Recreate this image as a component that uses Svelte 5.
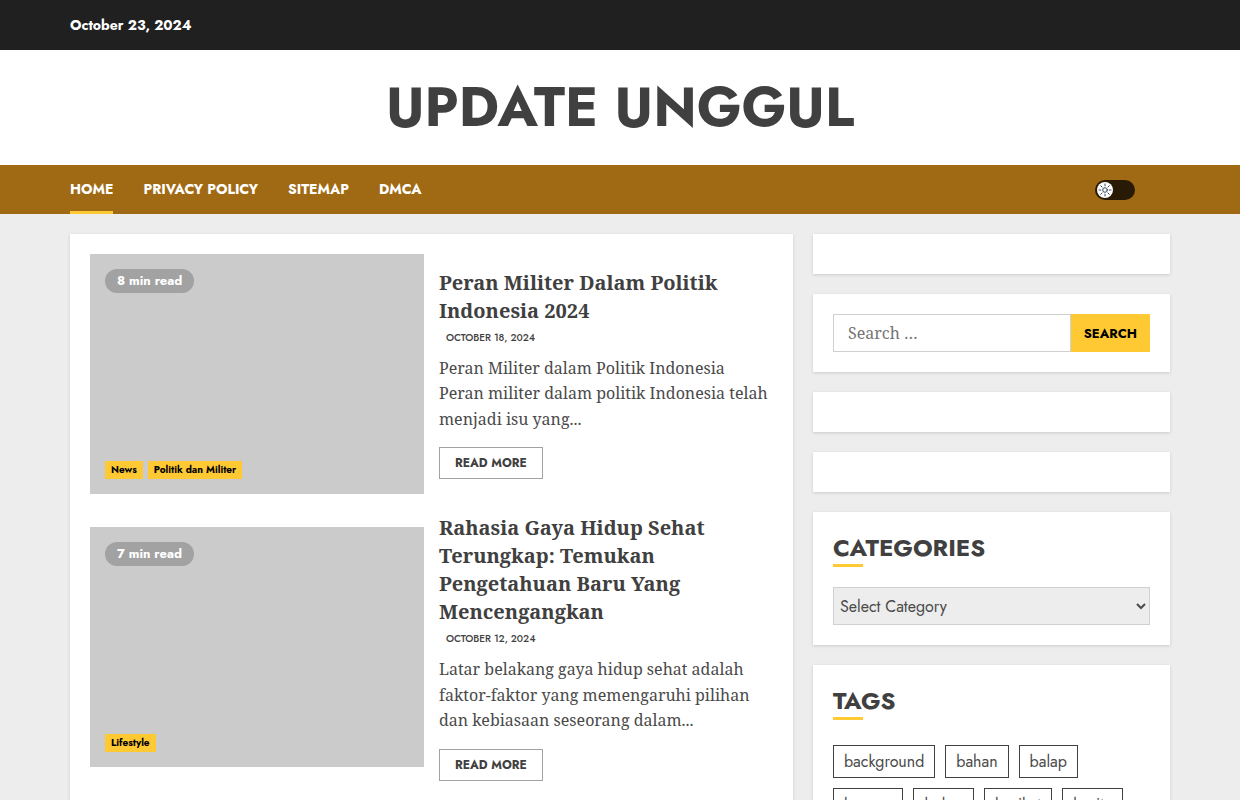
<script>
  const menu = ['Home', 'Privacy Policy', 'Sitemap', 'DMCA'];

  const posts = [
    {
      title: 'Peran Militer Dalam Politik Indonesia 2024',
      date: 'October 18, 2024',
      minutes: 8,
      cats: ['News', 'Politik dan Militer'],
      excerpt: 'Peran Militer dalam Politik Indonesia Peran militer dalam politik Indonesia telah menjadi isu yang...',
    },
    {
      title: 'Rahasia Gaya Hidup Sehat Terungkap: Temukan Pengetahuan Baru Yang Mencengangkan',
      date: 'October 12, 2024',
      minutes: 7,
      cats: ['Lifestyle'],
      excerpt: 'Latar belakang gaya hidup sehat adalah faktor-faktor yang memengaruhi pilihan dan kebiasaan seseorang dalam...',
    },
  ];

  const tags = ['background', 'bahan', 'balap', 'bangsa', 'bekas', 'berikut', 'berita'];

  const rays = [0, 45, 90, 135, 180, 225, 270, 315];

  let dark = $state(false);
  let query = $state('');
</script>

<div class="page">
  <div class="topbar">
    <div class="container">
      <span class="date">October 23, 2024</span>
    </div>
  </div>

  <header class="masthead">
    <h1><a href="#home">UPDATE UNGGUL</a></h1>
  </header>

  <nav class="navbar">
    <div class="container nav-inner">
      <ul class="menu">
        {#each menu as item, i}
          <li><a href="#{item}" class:active={i === 0}>{item}</a></li>
        {/each}
      </ul>
      <label class="toggle">
        <input type="checkbox" bind:checked={dark} aria-label="Dark mode" />
        <span class="knob">
          <svg viewBox="0 0 16 16" aria-hidden="true">
            <circle cx="8" cy="8" r="2.3" />
            {#each rays as angle}
              <line x1="8" y1="2" x2="8" y2="3.8" transform="rotate({angle} 8 8)" />
            {/each}
          </svg>
        </span>
      </label>
    </div>
  </nav>

  <div class="container content">
    <main class="posts">
      {#each posts as post}
        <article class="post">
          <div class="thumb">
            <span class="min-read">{post.minutes} min read</span>
            <div class="cats">
              {#each post.cats as cat}
                <a href="#{cat}">{cat}</a>
              {/each}
            </div>
          </div>
          <div class="details">
            <h3><a href="#post">{post.title}</a></h3>
            <div class="meta">{post.date}</div>
            <p>{post.excerpt}</p>
            <a class="read-more" href="#post">Read More</a>
          </div>
        </article>
      {/each}
    </main>

    <aside class="sidebar">
      <div class="widget"></div>
      <div class="widget">
        <form class="search" onsubmit={(e) => e.preventDefault()}>
          <input type="search" placeholder="Search …" aria-label="Search for:" bind:value={query} />
          <button type="submit">Search</button>
        </form>
      </div>
      <div class="widget"></div>
      <div class="widget"></div>
      <div class="widget">
        <h2>Categories</h2>
        <select aria-label="Categories">
          <option>Select Category</option>
          <option>Lifestyle</option>
          <option>News</option>
          <option>Politik dan Militer</option>
        </select>
      </div>
      <div class="widget">
        <h2>Tags</h2>
        <div class="tags">
          {#each tags as tag}
            <a href="#{tag}">{tag}</a>
          {/each}
        </div>
      </div>
    </aside>
  </div>
</div>

<style>
  :global(body) {
    margin: 0;
    background: #ededed;
  }

  .page {
    --sans: Jost, Lato, 'Open Sans', sans-serif;
    --serif: 'Noto Serif', 'DejaVu Serif Condensed', 'DejaVu Serif', serif;
    --accent: #ffc934;
    height: 100vh;
    overflow: hidden;
    font-family: var(--serif);
    font-size: 16px;
    line-height: 1.6;
    color: #4a4a4a;
  }

  .page * { box-sizing: border-box; }

  a {
    color: inherit;
    text-decoration: none;
  }

  .container {
    max-width: 1100px;
    margin: 0 auto;
  }

  /* Header */
  .topbar {
    padding: 13px 0;
    background: #202020;
    color: #fff;
    font: 700 14px/24px var(--sans);
  }

  .date { display: block; }

  .masthead {
    padding: 20px 0;
    background: #fff;
    text-align: center;
  }

  h1 {
    margin: 0;
    font: 700 55px/75px var(--sans);
    color: #404040;
  }

  .navbar {
    background: #a06a15;
    color: #fff;
  }

  .nav-inner {
    display: flex;
    align-items: center;
    justify-content: space-between;
  }

  .menu {
    display: flex;
    gap: 30px;
    margin: 0;
    padding: 0;
    list-style: none;
  }

  .menu a {
    display: block;
    font: 700 14px/49px var(--sans);
    text-transform: uppercase;
  }

  .menu a.active { box-shadow: inset 0 -3px var(--accent); }

  .toggle {
    display: flex;
    width: 40px;
    height: 20px;
    margin-right: 35px;
    padding: 2px;
    border-radius: 10px;
    background: #281a05;
    cursor: pointer;
  }

  .toggle input {
    position: absolute;
    margin: 0;
    opacity: 0;
  }

  .knob {
    width: 16px;
    height: 16px;
    border-radius: 50%;
    background: #fff;
  }

  .toggle input:checked + .knob { margin-left: auto; }

  .knob svg {
    display: block;
    fill: none;
    stroke: #24344f;
    stroke-width: 0.9;
    stroke-linecap: round;
  }

  /* Posts */
  .content {
    display: grid;
    grid-template-columns: minmax(0, 723fr) minmax(0, 357fr);
    gap: 20px;
    padding-top: 20px;
  }

  .posts {
    display: flex;
    flex-direction: column;
    gap: 20px;
    padding: 20px;
    background: #fff;
    box-shadow: 0 1px 3px rgba(0, 0, 0, 0.15);
  }

  .post {
    display: grid;
    grid-template-columns: 1fr 1fr;
    gap: 15px;
    align-items: center;
  }

  .thumb {
    display: flex;
    flex-direction: column;
    justify-content: space-between;
    align-items: flex-start;
    height: 240px;
    padding: 15px;
    background: #cbcbcb;
  }

  .min-read {
    padding: 0 12px;
    border-radius: 12px;
    background: #a2a2a2;
    color: #fff;
    font: 700 13px/24px var(--sans);
  }

  .cats {
    display: flex;
    gap: 5px;
  }

  .cats a {
    padding: 0 6px;
    background: var(--accent);
    color: #000;
    font: 700 10px/18px var(--sans);
  }

  h3 {
    margin: 0;
    font-size: 20px;
    font-weight: 700;
    line-height: 28px;
    color: #404040;
  }

  .meta {
    margin-bottom: 5px;
    padding-left: 7px;
    font: 500 10px/26px var(--sans);
    text-transform: uppercase;
    color: #404040;
  }

  p { margin: 0 0 15px; }

  .read-more {
    display: block;
    width: fit-content;
    padding: 0 15px;
    border: 1px solid #a2a2a2;
    font: 700 12px/30px var(--sans);
    text-transform: uppercase;
    color: #404040;
  }

  /* Sidebar */
  .sidebar {
    display: flex;
    flex-direction: column;
    gap: 20px;
  }

  .widget {
    padding: 20px;
    background: #fff;
    box-shadow: 0 1px 3px rgba(0, 0, 0, 0.15);
  }

  .search { display: flex; }

  .search input {
    flex: 1;
    min-width: 0;
    height: 38px;
    padding: 0 14px;
    border: 1px solid #d0d0d0;
    border-radius: 0;
    background: #fff;
    font: 16px var(--serif);
  }

  .search input::placeholder { color: #757575; }

  .search button {
    padding: 0 13px;
    border: 0;
    background: var(--accent);
    color: #000;
    font: 700 13px var(--sans);
    text-transform: uppercase;
  }

  h2 {
    margin: 0 0 20px;
    font: 700 24px/32px var(--sans);
    text-transform: uppercase;
    color: #404040;
  }

  h2::after {
    content: '';
    display: block;
    width: 30px;
    height: 3px;
    background: var(--accent);
  }

  select {
    display: block;
    width: 100%;
    height: 38px;
    padding: 0 2px;
    border: 1px solid #d0d0d0;
    border-radius: 0;
    background: #ededed;
    color: #4a4a4a;
    font: 16px var(--sans);
  }

  .tags {
    display: flex;
    flex-wrap: wrap;
    gap: 10px;
    padding-top: 5px;
  }

  .tags a {
    padding: 0 10px;
    border: 1px solid #404040;
    font: 16px/31px var(--sans);
  }
</style>
